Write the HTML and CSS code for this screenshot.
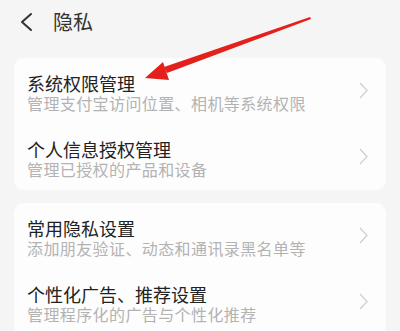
FILE: index.html
```html
<!DOCTYPE html>
<html lang="zh-CN">
<head>
  <meta charset="UTF-8" />
  <meta name="viewport" content="width=device-width, initial-scale=1.0"/>
  <title>隐私</title>
  <link rel="stylesheet" href="styles.css">
</head>
<body>

  <!-- Barra superior -->
  <div class="topbar">
    <svg class="back" width="16" height="20" viewBox="0 0 16 20">
      <path d="M13 2 L4 10 L13 18" fill="none" stroke="#333" stroke-width="2" stroke-linecap="round" stroke-linejoin="round"/>
    </svg>
    <span class="topbar-title">隐私</span>
  </div>

  <div class="card">
    <div class="item">
      <div class="item-text">
        <div class="item-title">系统权限管理</div>
        <div class="item-sub">管理支付宝访问位置、相机等系统权限</div>
      </div>
      <svg class="chev" width="9" height="17" viewBox="0 0 9 17"><path d="M1 1 L8 8.5 L1 16" fill="none" stroke="#cfcfcf" stroke-width="1.3"/></svg>
    </div>
    <div class="item">
      <div class="item-text">
        <div class="item-title">个人信息授权管理</div>
        <div class="item-sub">管理已授权的产品和设备</div>
      </div>
      <svg class="chev" width="9" height="17" viewBox="0 0 9 17"><path d="M1 1 L8 8.5 L1 16" fill="none" stroke="#cfcfcf" stroke-width="1.3"/></svg>
    </div>
  </div>

  <div class="card">
    <div class="item">
      <div class="item-text">
        <div class="item-title">常用隐私设置</div>
        <div class="item-sub">添加朋友验证、动态和通讯录黑名单等</div>
      </div>
      <svg class="chev" width="9" height="17" viewBox="0 0 9 17"><path d="M1 1 L8 8.5 L1 16" fill="none" stroke="#cfcfcf" stroke-width="1.3"/></svg>
    </div>
    <div class="item">
      <div class="item-text">
        <div class="item-title">个性化广告、推荐设置</div>
        <div class="item-sub">管理程序化的广告与个性化推荐</div>
      </div>
      <svg class="chev" width="9" height="17" viewBox="0 0 9 17"><path d="M1 1 L8 8.5 L1 16" fill="none" stroke="#cfcfcf" stroke-width="1.3"/></svg>
    </div>
  </div>

  <!-- Flecha roja encima -->
  <svg class="arrow" width="400" height="331" viewBox="0 0 400 331">
    <polygon points="310,17 311,19 167,73 164,67" fill="#e3201b"/>
    <polygon points="145,78 163,62 169,80" fill="#e3201b"/>
  </svg>

</body>
</html>
```

FILE: styles.css
```css
body {
  margin: 0;
  background-color: #f5f5f5;
  font-family: "Noto Sans CJK SC", "Noto Sans", sans-serif;
  width: 400px;
  height: 331px;
  overflow: hidden;
  position: relative;
}

.topbar {
  height: 44px;
  display: flex;
  align-items: center;
  padding-left: 18px;
  margin-bottom: 14px;
}

.back {
  display: block;
  margin-right: 19px;
}

.topbar-title {
  font-size: 20px;
  color: #333;
  line-height: 24px;
}

.card {
  background-color: #fdfdfd;
  border-radius: 10px;
  margin: 0 14px 13px;
}

.item {
  display: flex;
  align-items: center;
  padding: 14px 18px 12px 13px;
  height: 40px;
}

.item-text {
  flex: 1;
}

.item-title {
  font-size: 18px;
  line-height: 22px;
  color: #222;
}

.item-sub {
  font-size: 16px;
  letter-spacing: 0.4px;
  line-height: 18px;
  color: #b3b3b3;
}

.chev {
  display: block;
  margin-top: -4px;
}

.arrow {
  position: absolute;
  top: 0;
  left: 0;
  pointer-events: none;
}
```
